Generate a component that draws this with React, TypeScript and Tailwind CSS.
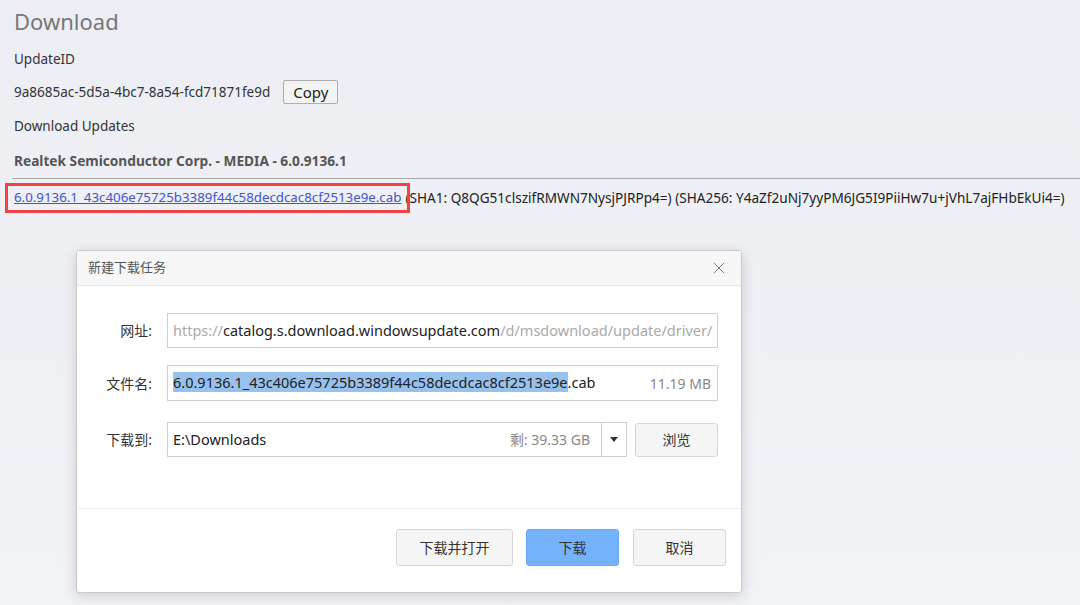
import { X } from "lucide-react";

// ── Fonts ─────────────────────────────────────────────────────────

const SANS = "font-['Noto_Sans','Noto_Sans_CJK_SC',sans-serif]";

// ── Download Dialog ───────────────────────────────────────────────

function Field({ label, className = "", children }: { label: string; className?: string; children: React.ReactNode }) {
  return (
    <div className={`flex items-center ${className}`}>
      <div className="w-[76px] shrink-0 pr-[1px] text-right text-[14px] text-[#333]">{label}</div>
      <div className="ml-[14px] flex min-w-0 flex-1 items-center">{children}</div>
    </div>
  );
}

function DownloadDialog() {
  return (
    <div className="absolute left-[76px] top-[250px] flex h-[343px] w-[666px] flex-col rounded-[3px] border border-[#c9c9c9] bg-white shadow-[0_3px_14px_rgba(0,0,0,0.16)]">
      {/* Title bar */}
      <div className="flex h-[35px] shrink-0 items-center justify-between rounded-t-[3px] border-b border-[#e6e6e6] bg-[#f7f7f7] pl-[11px] pr-[12px]">
        <span className="text-[13px] text-[#555]">新建下载任务</span>
        <X className="h-[20px] w-[20px] text-[#777]" strokeWidth={1.2} />
      </div>

      {/* Fields */}
      <div className="flex flex-col gap-[17px] pr-[23px] pt-[27px]">
        <Field label="网址:">
          <div className="flex h-[35px] min-w-0 flex-1 items-center overflow-hidden whitespace-nowrap border border-[#cfcfcf] pl-[5px] text-[14.5px]">
            <span className="text-[#aaa]">https://</span>
            <span className="text-[#222]">catalog.s.download.windowsupdate.com</span>
            <span className="text-[#aaa]">/d/msdownload/update/driver/</span>
          </div>
        </Field>
        <Field label="文件名:">
          <div className="flex h-[36px] min-w-0 flex-1 items-center justify-between whitespace-nowrap border border-[#cfcfcf] pl-[5px] pr-[6px] text-[14.5px]">
            <span className="text-[#222]">
              <span className="bg-[#99c1ee]">6.0.9136.1_43c406e75725b3389f44c58decdcac8cf2513e9e</span>.cab
            </span>
            <span className="text-[14px] text-[#888]">11.19 MB</span>
          </div>
        </Field>
        <Field label="下载到:" className="mt-[4px]">
          <div className="flex h-[35px] min-w-0 flex-1 items-center justify-between whitespace-nowrap border border-[#cfcfcf] pl-[5px] pr-[11px] text-[14.5px]">
            <span className="text-[#222]">E:\Downloads</span>
            <span className="text-[14px] text-[#888]">剩: 39.33 GB</span>
          </div>
          <div className="flex h-[35px] w-[25px] shrink-0 items-center justify-center border border-l-0 border-[#cfcfcf]">
            <svg width="8" height="5" viewBox="0 0 8 5">
              <path d="M0 0h8L4 5z" fill="#333" />
            </svg>
          </div>
          <button className="ml-[8px] flex h-[34px] w-[83px] shrink-0 items-center justify-center rounded-[3px] border border-[#d6d6d6] bg-[#f5f5f5] text-[14px] text-[#333]">
            浏览
          </button>
        </Field>
      </div>

      {/* Footer */}
      <div className="mt-auto flex h-[84px] items-center justify-end gap-[13px] border-t border-[#ececec] pb-[6px] pr-[15px]">
        <button className="flex h-[37px] w-[117px] items-center justify-center rounded-[3px] border border-[#d6d6d6] bg-[#f5f5f5] text-[14px] text-[#333]">
          下载并打开
        </button>
        <button className="flex h-[37px] w-[93px] items-center justify-center rounded-[3px] border border-[#6aa9f6] bg-[#74b2fb] text-[14px] text-[#333]">
          下载
        </button>
        <button className="ml-[1px] flex h-[37px] w-[93px] items-center justify-center rounded-[3px] border border-[#d6d6d6] bg-[#f5f5f5] text-[14px] text-[#333]">
          取消
        </button>
      </div>
    </div>
  );
}

// ── Page ──────────────────────────────────────────────────────────

export default function App() {
  return (
    <div className={`relative h-[605px] w-[1080px] overflow-hidden bg-gradient-to-b from-[#eceef3] to-[#f2f3f7] ${SANS}`}>
      <div className="pl-[14px]">
        <div className="flex h-[42px] items-center text-[22px] text-[#777]">Download</div>
        <div className="flex h-[34px] items-center text-[13.5px] text-[#333]">UpdateID</div>
        <div className="flex h-[32px] items-center text-[13.5px] text-[#333]">
          <span>9a8685ac-5d5a-4bc7-8a54-fcd71871fe9d</span>
          <button className="ml-[13px] flex h-[24px] w-[55px] items-center justify-center rounded-[2px] border border-[#adadad] bg-[#f3f3f3] text-[15px] text-[#222]">
            Copy
          </button>
        </div>
        <div className="flex h-[36px] items-center text-[13.5px] text-[#333]">Download Updates</div>
        <div className="flex h-[34px] items-center text-[13.7px] font-bold text-[#555]">
          Realtek Semiconductor Corp. - MEDIA - 6.0.9136.1
        </div>
      </div>
      <div className="ml-[12px] border-t border-[#a9a9a9]" />
      <div className="mt-[4px] flex items-center whitespace-nowrap pl-[5px] text-[13.3px] text-[#222]">
        <div className="relative z-10 flex h-[30px] items-center border-[3px] border-[#ee4343] pl-[6px] pr-[6px]">
          <a href="#" className="text-[#3e55cc] underline">
            6.0.9136.1_43c406e75725b3389f44c58decdcac8cf2513e9e.cab
          </a>
        </div>
        <span className="-ml-[5px] text-[13.6px]">(SHA1: Q8QG51clszifRMWN7NysjPJRPp4=) (SHA256: Y4aZf2uNj7yyPM6JG5I9PiiHw7u+jVhL7ajFHbEkUi4=)</span>
      </div>

      <DownloadDialog />
    </div>
  );
}
